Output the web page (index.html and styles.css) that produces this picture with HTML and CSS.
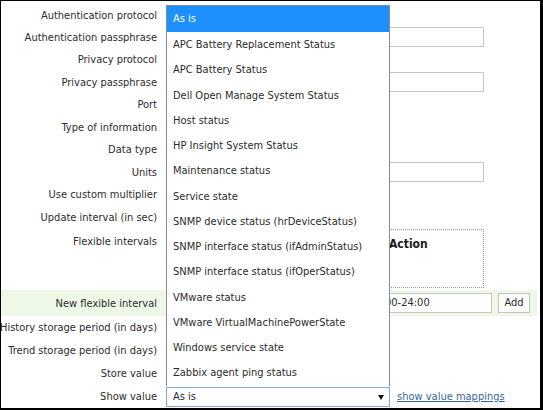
FILE: index.html
```html
<!DOCTYPE html>
<html>
<head>
<meta charset="utf-8">
<link rel="stylesheet" href="styles.css">
</head>
<body>
<div class="frame">
  <form class="form">
    <div class="row r-first">
      <div class="label">Authentication protocol</div>
      <div class="field"><div class="select small-select"></div></div>
    </div>
    <div class="row">
      <div class="label">Authentication passphrase</div>
      <div class="field"><div class="input wide"></div></div>
    </div>
    <div class="row">
      <div class="label">Privacy protocol</div>
      <div class="field"></div>
    </div>
    <div class="row">
      <div class="label">Privacy passphrase</div>
      <div class="field"><div class="input wide"></div></div>
    </div>
    <div class="row">
      <div class="label">Port</div>
      <div class="field"><div class="input narrow"></div></div>
    </div>
    <div class="row">
      <div class="label">Type of information</div>
      <div class="field"></div>
    </div>
    <div class="row">
      <div class="label">Data type</div>
      <div class="field"></div>
    </div>
    <div class="row">
      <div class="label">Units</div>
      <div class="field"><div class="input wide"></div></div>
    </div>
    <div class="row">
      <div class="label">Use custom multiplier</div>
      <div class="field"></div>
    </div>
    <div class="row">
      <div class="label">Update interval (in sec)</div>
      <div class="field"><div class="input narrow"></div></div>
    </div>
    <div class="row r-flex">
      <div class="label">Flexible intervals</div>
      <div class="field">
        <div class="intervals">
          <div class="int-head">
            <span class="th th-interval"></span>
            <span class="th th-period"></span>
            <span class="th">Action</span>
          </div>
        </div>
      </div>
    </div>
    <div class="row r-new">
      <div class="label">New flexible interval</div>
      <div class="field new-field">
        <span class="mini-label"></span>
        <div class="input period-input"><span class="period-text">00-24:00</span></div>
        <div class="button">Add</div>
      </div>
    </div>
    <div class="row r-low">
      <div class="label">History storage period (in days)</div>
      <div class="field"><div class="input narrow"></div></div>
    </div>
    <div class="row r-low">
      <div class="label">Trend storage period (in days)</div>
      <div class="field"><div class="input narrow"></div></div>
    </div>
    <div class="row r-low">
      <div class="label">Store value</div>
      <div class="field"></div>
    </div>
    <div class="row r-low">
      <div class="label">Show value</div>
      <div class="field show-field">
        <div class="select value-select">As is<span class="arrow"></span></div>
        <a class="link" href="#">show value mappings</a>
      </div>
    </div>
  </form>

  <ul class="dropdown">
    <li class="opt selected">As is</li>
    <li class="opt">APC Battery Replacement Status</li>
    <li class="opt">APC Battery Status</li>
    <li class="opt">Dell Open Manage System Status</li>
    <li class="opt">Host status</li>
    <li class="opt">HP Insight System Status</li>
    <li class="opt">Maintenance status</li>
    <li class="opt">Service state</li>
    <li class="opt">SNMP device status (hrDeviceStatus)</li>
    <li class="opt">SNMP interface status (ifAdminStatus)</li>
    <li class="opt">SNMP interface status (ifOperStatus)</li>
    <li class="opt">VMware status</li>
    <li class="opt">VMware VirtualMachinePowerState</li>
    <li class="opt">Windows service state</li>
    <li class="opt">Zabbix agent ping status</li>
  </ul>
</div>
</body>
</html>
```

FILE: styles.css
```css
* { box-sizing: border-box; }

html, body {
  margin: 0;
  padding: 0;
  background: #ffffff;
}

.frame {
  position: relative;
  width: 543px;
  height: 410px;
  overflow: hidden;
  background: #ffffff;
  border-style: solid;
  border-color: #000000;
  border-width: 1px 3px 2px 1px;
  font-family: "DejaVu Sans Condensed", "DejaVu Sans", sans-serif;
  font-stretch: condensed;
  font-size: 11px;
  color: #2b2b2b;
}

.form {
  margin: 0;
  padding-top: 4px;
  width: 536px;
}

.row {
  display: grid;
  grid-template-columns: 156px 1fr;
  column-gap: 9px;
  align-items: center;
  height: 22.5px;
}

.r-first { height: 21px; }
.r-flex { height: 61.5px; align-items: start; }
.r-new { height: 26px; background: #eef8e7; }
.r-low { height: 23px; }

.label {
  display: flex;
  justify-content: flex-end;
  white-space: nowrap;
  line-height: 15px;
}

.r-flex .label { padding-top: 5px; }

.field {
  display: flex;
  align-items: center;
  min-width: 0;
}

.input {
  height: 20px;
  border: 1px solid #c6c6c6;
  background: #ffffff;
  padding: 0 3px;
  line-height: 18px;
  white-space: nowrap;
}

.wide { width: 318px; }
.narrow { width: 60px; }

.select {
  height: 20px;
  border: 1px solid #a9a9a9;
  background: #ffffff;
  line-height: 18px;
  padding: 0 6px;
}

.small-select {
  width: 92px;
  margin-top: -2px;
}

.intervals {
  margin-top: 0.5px;
  width: 318px;
  height: 59px;
  border: 1px dotted #9a9a9a;
}

.int-head {
  display: flex;
  padding-top: 7px;
  font-weight: bold;
  font-size: 12px;
  color: #1a1a1a;
}

.th-interval { width: 110px; flex: none; }
.th-period { width: 112px; flex: none; }

.new-field {
  gap: 6px;
}

.mini-label { width: 120px; flex: none; }

.period-input {
  width: 200px;
  flex: none;
  padding-left: 92px;
  color: #2b2b2b;
}

.button {
  width: 32px;
  height: 20px;
  flex: none;
  border: 1px solid #c2c2c2;
  background: #fbfbfb;
  text-align: center;
  line-height: 18px;
  color: #2b2b2b;
}

.show-field { gap: 7px; }

.value-select {
  position: relative;
  width: 224px;
  border-color: #82a9d6;
  padding-left: 6px;
  display: flex;
  align-items: center;
}

.arrow {
  position: absolute;
  right: 5px;
  top: 7px;
  width: 0;
  height: 0;
  border-left: 3px solid transparent;
  border-right: 3px solid transparent;
  border-top: 5px solid #111111;
}

.link {
  color: #3a64a0;
  text-decoration: underline;
  white-space: nowrap;
}

.dropdown {
  position: absolute;
  left: 165px;
  top: 4px;
  width: 224px;
  margin: 0;
  padding: 0;
  list-style: none;
  background: #ffffff;
  border: 1px solid #838d97;
  border-bottom: none;
}

.opt {
  height: 25.25px;
  line-height: 25.25px;
  padding-left: 6px;
  white-space: nowrap;
  color: #2b2b2b;
}

.opt.selected {
  background: #1e8ffe;
  color: #ffffff;
  height: 26px;
  line-height: 26px;
}
```
